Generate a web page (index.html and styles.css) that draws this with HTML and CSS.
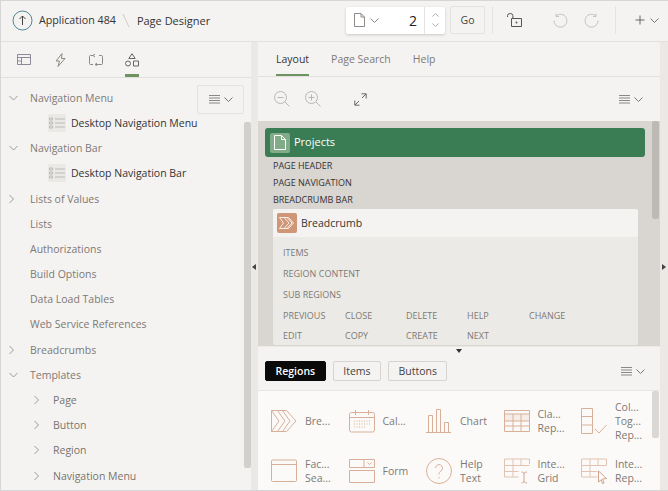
FILE: index.html
```html
<!DOCTYPE html>
<html lang="en">
<head>
<meta charset="utf-8">
<title>Page Designer</title>
<link rel="stylesheet" href="styles.css">
</head>
<body>
<div class="app">
  <header class="topbar">
    <svg class="up" width="21" height="21" viewBox="0 0 21 21"><circle cx="10.5" cy="10.5" r="9.5" fill="none" stroke="#4f8597" stroke-width="1"/><path d="M10.5 15V6M7.5 9l3-3 3 3" fill="none" stroke="#444" stroke-width="1"/></svg>
    <span class="crumb first">Application 484</span>
    <svg class="slash" width="8" height="15" viewBox="0 0 8 15"><path d="M1 1l6 13" stroke="#d0ccc8" fill="none"/></svg>
    <span class="crumb">Page Designer</span>
    <div class="spacer"></div>
    <div class="pagebox">
      <div class="pagesel">
        <svg width="11" height="14" viewBox="0 0 11 14"><path d="M.5.5h6.500l3.500 3.500v9.500h-10zM7 .5v3.500h3.500" fill="none" stroke="#8d8a88"/></svg>
        <svg class="chev" width="9" height="5" viewBox="0 0 9 5"><path d="M.5.500l4 4 4-4" fill="none" stroke="#8d8a88"/></svg>
        <span class="pagenum">2</span>
      </div>
      <div class="stepper">
        <svg width="7" height="4" viewBox="0 0 7 4"><path d="M.5 3.500l3-3 3 3" fill="none" stroke="#aaa"/></svg>
        <svg width="7" height="4" viewBox="0 0 7 4"><path d="M.5.500l3 3 3-3" fill="none" stroke="#aaa"/></svg>
      </div>
    </div>
    <button class="go">Go</button>
    <span class="vr first-vr"></span>
    <svg class="lock" width="15" height="14" viewBox="0 0 15 14"><path d="M4.500 5.500h10v8h-10z" fill="none" stroke="#555"/><path d="M.5 4V2.700a2.700 2.200 0 0 1 5.400 0V5.500" fill="none" stroke="#555"/><circle cx="9.500" cy="9.500" r=".9" fill="#555"/></svg>
    <svg class="undo" width="15" height="15" viewBox="0 0 15 15"><path d="M3 3a6.500 6.500 0 1 1-2 4.500M3 .5V3.500h3" fill="none" stroke="#c6c4c2"/></svg>
    <svg class="redo" width="15" height="15" viewBox="0 0 15 15"><path d="M12 3a6.500 6.500 0 1 0 2 4.500M12 .5V3.500H9" fill="none" stroke="#c6c4c2"/></svg>
    <span class="vr second-vr"></span>
    <svg class="plus" width="10" height="10" viewBox="0 0 10 10"><path d="M5 .5v9M.5 5h9" stroke="#666" fill="none"/></svg>
    <svg class="chev plus-chev" width="9" height="5" viewBox="0 0 9 5"><path d="M.5.500l4 4 4-4" fill="none" stroke="#777"/></svg>
  </header>

  <div class="main">
    <aside class="left">
      <nav class="lefttabs">
        <span class="ltab"><svg width="14" height="11" viewBox="0 0 14 11"><path d="M.5.500h13v10H.5zM.5 3.500h13M4.500 3.500v7M.5 7h4" fill="none" stroke="#8e8a9a"/></svg></span>
        <span class="ltab"><svg width="11" height="14" viewBox="0 0 11 14"><path d="M7 .5L1 8h3.500L3 13.500 10 5.500H6.500z" fill="none" stroke="#8a8a80"/></svg></span>
        <span class="ltab"><svg width="14" height="12" viewBox="0 0 14 12"><path d="M4 1.500H1.500a1 1 0 0 0-1 1v7a1 1 0 0 0 1 1H4M10 1.500h2.500a1 1 0 0 1 1 1v7a1 1 0 0 1-1 1H7M6 .2L4 1.500 6 3M8 9l-2 1.500L8 12" fill="none" stroke="#8a8a8a"/></svg></span>
        <span class="ltab active"><svg width="14" height="14" viewBox="0 0 14 14"><path d="M7 .7l3.200 4.800H3.800z M8.500 8h5v5h-5z" fill="none" stroke="#666"/><circle cx="3" cy="10.500" r="2.500" fill="none" stroke="#666"/></svg></span>
      </nav>
      <div class="tree">
        <div class="row"><svg class="tw" width="9" height="5" viewBox="0 0 9 5"><path d="M.5.500l4 4 4-4" fill="none" stroke="#999"/></svg><span>Navigation Menu</span></div>
        <div class="row leaf"><span class="leaficon"><svg width="16" height="12" viewBox="0 0 16 12"><path d="M6 2h10M6 6h10M6 10h10" stroke="#bbb" fill="none"/><path d="M.5 1h3v2h-3zM.5 5h3v2h-3zM.5 9h3v2h-3z" stroke="#bbb" fill="none"/></svg></span><span>Desktop Navigation Menu</span></div>
        <div class="row"><svg class="tw" width="9" height="5" viewBox="0 0 9 5"><path d="M.5.500l4 4 4-4" fill="none" stroke="#999"/></svg><span>Navigation Bar</span></div>
        <div class="row leaf"><span class="leaficon"><svg width="16" height="12" viewBox="0 0 16 12"><path d="M6 2h10M6 6h10M6 10h10" stroke="#bbb" fill="none"/><path d="M.5 1h3v2h-3zM.5 5h3v2h-3zM.5 9h3v2h-3z" stroke="#bbb" fill="none"/></svg></span><span>Desktop Navigation Bar</span></div>
        <div class="row"><svg class="tw" width="5" height="9" viewBox="0 0 5 9"><path d="M.5.500l4 4-4 4" fill="none" stroke="#999"/></svg><span>Lists of Values</span></div>
        <div class="row"><span>Lists</span></div>
        <div class="row"><span>Authorizations</span></div>
        <div class="row"><span>Build Options</span></div>
        <div class="row"><span>Data Load Tables</span></div>
        <div class="row"><span>Web Service References</span></div>
        <div class="row"><svg class="tw" width="5" height="9" viewBox="0 0 5 9"><path d="M.5.500l4 4-4 4" fill="none" stroke="#999"/></svg><span>Breadcrumbs</span></div>
        <div class="row"><svg class="tw" width="9" height="5" viewBox="0 0 9 5"><path d="M.5.500l4 4 4-4" fill="none" stroke="#999"/></svg><span>Templates</span></div>
        <div class="row sub"><svg class="tw" width="5" height="9" viewBox="0 0 5 9"><path d="M.5.500l4 4-4 4" fill="none" stroke="#999"/></svg><span>Page</span></div>
        <div class="row sub"><svg class="tw" width="5" height="9" viewBox="0 0 5 9"><path d="M.5.500l4 4-4 4" fill="none" stroke="#999"/></svg><span>Button</span></div>
        <div class="row sub"><svg class="tw" width="5" height="9" viewBox="0 0 5 9"><path d="M.5.500l4 4-4 4" fill="none" stroke="#999"/></svg><span>Region</span></div>
        <div class="row sub"><svg class="tw" width="5" height="9" viewBox="0 0 5 9"><path d="M.5.500l4 4-4 4" fill="none" stroke="#999"/></svg><span>Navigation Menu</span></div>
        <div class="treemenu"><svg width="12" height="9" viewBox="0 0 12 9"><path d="M0 .5h11M0 3h11M0 5.500h11M0 8h11" stroke="#888" fill="none"/></svg><svg width="9" height="5" viewBox="0 0 9 5"><path d="M.5.500l4 4 4-4" fill="none" stroke="#777"/></svg></div>
        <div class="sb tree-sb"></div>
      </div>
    </aside>

    <div class="gutter left-gutter"><span class="arrow-l"></span></div>

    <section class="center">
      <nav class="ctabs">
        <span class="ctab active">Layout</span>
        <span class="ctab">Page Search</span>
        <span class="ctab">Help</span>
      </nav>
      <div class="ctools">
        <svg class="zo" width="16" height="16" viewBox="0 0 16 16"><circle cx="6.500" cy="6.500" r="6" fill="none" stroke="#b8b6b4"/><path d="M3.500 6.500h6M11 11l4.500 4.500" stroke="#b8b6b4" fill="none"/></svg>
        <svg class="zi" width="16" height="16" viewBox="0 0 16 16"><circle cx="6.500" cy="6.500" r="6" fill="none" stroke="#b8b6b4"/><path d="M3.500 6.500h6M6.500 3.500v6M11 11l4.500 4.500" stroke="#b8b6b4" fill="none"/></svg>
        <svg class="ex" width="13" height="13" viewBox="0 0 13 13"><path d="M1 12L5 8M8 5l4-4M7.500 .8h4.700v4.700M.8 7.500v4.700h4.700" stroke="#666" fill="none"/></svg>
        <div class="spacer"></div>
        <svg class="m1" width="12" height="9" viewBox="0 0 12 9"><path d="M0 .5h11M0 3h11M0 5.500h11M0 8h11" stroke="#888" fill="none"/></svg>
        <svg width="9" height="5" viewBox="0 0 9 5"><path d="M.5.500l4 4 4-4" fill="none" stroke="#777"/></svg>
      </div>
      <div class="canvas">
        <div class="pagehead">
          <span class="pageicon"><svg width="12" height="15" viewBox="0 0 12 15"><path d="M.5.500h7l4 4v10H.5zM7.500.5v4h4" fill="none" stroke="#fff"/></svg></span>
          <span class="pagetitle">Projects</span>
        </div>
        <div class="plabel">PAGE HEADER</div>
        <div class="plabel">PAGE NAVIGATION</div>
        <div class="plabel">BREADCRUMB BAR</div>
        <div class="card">
          <div class="cardhead">
            <span class="cicon"><svg width="16" height="12" viewBox="0 0 16 12"><path d="M.5.500h9l5 5.500-5 5.500h-9l4-5.500zM5 .5l5 5.500-5 5.500M8 .5l5 5.500-5 5.500" fill="none" stroke="#fbeee6"/></svg></span>
            <span>Breadcrumb</span>
          </div>
          <div class="cardbody">
            <div class="slot">ITEMS</div>
            <div class="slot">REGION CONTENT</div>
            <div class="slot">SUB REGIONS</div>
            <div class="slots">
              <span>PREVIOUS</span><span>CLOSE</span><span>DELETE</span><span>HELP</span><span>CHANGE</span>
              <span>EDIT</span><span>COPY</span><span>CREATE</span><span>NEXT</span>
            </div>
          </div>
        </div>
        <div class="sb canvas-sb"></div>
      </div>
      <div class="hsplit"><span class="arrow-d"></span></div>
      <div class="gtools">
        <button class="gbtn on">Regions</button>
        <button class="gbtn">Items</button>
        <button class="gbtn">Buttons</button>
        <div class="spacer"></div>
        <svg class="m1" width="12" height="9" viewBox="0 0 12 9"><path d="M0 .5h11M0 3h11M0 5.500h11M0 8h11" stroke="#888" fill="none"/></svg>
        <svg width="9" height="5" viewBox="0 0 9 5"><path d="M.5.500l4 4 4-4" fill="none" stroke="#777"/></svg>
      </div>
      <div class="gallery">
        <div class="gitem">
          <svg width="26" height="24" viewBox="0 0 26 24"><path d="M.5 1.500h15l9.500 10.500-9.500 10.500H.5zM.5 1.500L8 12 .5 22.500M6.500 1.500L14 12 6.500 22.500M11.500 1.500L19 12l-7.500 10.500" fill="none" stroke="#d8b09a"/></svg>
          <span>Bre...</span>
        </div>
        <div class="gitem">
          <svg width="26" height="24" viewBox="0 0 26 24"><rect x=".5" y="3.500" width="25" height="19.500" rx="2" fill="none" stroke="#d8b09a"/><path d="M.5 8.500h25M6.500 1v5M19.500 1v5" stroke="#d8b09a" fill="none"/><path d="M5 12h16M5 15h16M5 18h12" stroke="#d8b09a" stroke-dasharray="1 1.500" fill="none"/></svg>
          <span>Cal...</span>
        </div>
        <div class="gitem">
          <svg width="26" height="24" viewBox="0 0 26 24"><path d="M0 23.500h25M2.500 23.500v-17h4v17M10.500 23.500V.5h4v23M18.500 23.500v-10h4v10" fill="none" stroke="#d8b09a"/></svg>
          <span>Chart</span>
        </div>
        <div class="gitem">
          <svg width="26" height="24" viewBox="0 0 26 24"><path d="M.5 5h25v7H.5z" fill="#f5ece6"/><path d="M.5 1.500h25v21H.5zM.5 5h25M.5 12h25M.5 17h25M9 5v17.500M17 5v17.500" fill="none" stroke="#d8b09a"/></svg>
          <span class="two">Cla...<br>Rep...</span>
        </div>
        <div class="gitem">
          <svg width="26" height="26" viewBox="0 0 26 26"><path d="M.5.500h11v25H.5zM.5 8.500h11M.5 17h11M14 21l4 4 7.500-8" fill="none" stroke="#d8b09a"/></svg>
          <span class="three">Col...<br>Tog...<br>Rep...</span>
        </div>
        <div class="gitem">
          <svg width="26" height="24" viewBox="0 0 26 24"><rect x=".5" y="1" width="25" height="21.500" rx="1" fill="none" stroke="#d8b09a"/><path d="M.5 5.500h25" stroke="#d8b09a" fill="none"/></svg>
          <span class="two">Fac...<br>Sea...</span>
        </div>
        <div class="gitem">
          <svg width="26" height="24" viewBox="0 0 26 24"><path d="M.5.500h25v8H.5zM15 .5v8M.5 11.500h25v12H.5z" fill="none" stroke="#d8b09a"/><path d="M18.500 3.500l2 2 2-2" fill="none" stroke="#d8b09a"/></svg>
          <span>Form</span>
        </div>
        <div class="gitem">
          <svg width="26" height="26" viewBox="0 0 26 26"><circle cx="13" cy="13" r="12.500" fill="none" stroke="#d8b09a"/><path d="M9.500 10a3.500 3.500 0 1 1 5.500 3c-1.500 1-2 1.500-2 3.500M13 19v1.500" fill="none" stroke="#d8b09a"/></svg>
          <span class="two">Help<br>Text</span>
        </div>
        <div class="gitem">
          <svg width="26" height="26" viewBox="0 0 26 26"><path d="M.5 1h25v5M.5 1v18h14M.5 7.500h25M.5 13.500h14M9 1v18M17 1v6" fill="none" stroke="#e0c3b1"/><path d="M17.500 14c2 0 2.500 1 2.500 2v7c0 1-.5 2-2.500 2M23 14c-2 0-3 1-3 2M23 25c-2 0-3-1-3-2" fill="none" stroke="#cfa48c"/></svg>
          <span class="two">Inte...<br>Grid</span>
        </div>
        <div class="gitem">
          <svg width="26" height="26" viewBox="0 0 26 26"><path d="M.5 1h25v6M.5 1v18h16M.5 7.500h25M.5 13.500h16M9 1v18M17 1v6" fill="none" stroke="#e0c3b1"/><path d="M17.500 13l8 7.500-4 .5 1.500 4-1.500.7-1.500-4-2.500 2.500z" fill="#fcfaf9" stroke="#cfa48c"/></svg>
          <span class="two">Inte...<br>Rep...</span>
        </div>
        <div class="sb gallery-sb"></div>
      </div>
    </section>

    <div class="gutter right-gutter"><span class="arrow-r"></span></div>
  </div>
</div>
</body>
</html>
```

FILE: styles.css
```css
* { box-sizing: border-box; }
html, body { margin: 0; padding: 0; height: 100%; overflow: hidden; }
body { font-family: "Open Sans", sans-serif; font-size: 10.500px; color: #333; background: #f5f3f1; }
svg { display: block; flex: none; }
.spacer { flex: 1; }
.app { width: 668px; height: 491px; display: flex; flex-direction: column; border-top: 1px solid #d6d6d6; border-left: 1px solid #d6d6d6; border-bottom: 1px solid #d6d6d6; }

.topbar { height: 41px; flex: none; display: flex; align-items: center; padding: 0 0 2px 11px; border-bottom: 1px solid #e2e0de; background: #f5f3f1; }
.crumb { font-size: 11px; color: #333; }
.crumb.first { margin-left: 6px; font-size: 10.700px; }
.slash { margin: 0 7px 0 6px; }
.pagebox { width: 99px; height: 27px; display: flex; background: #fff; border-radius: 2px; box-shadow: 0 1px 3px rgba(0,0,0,.18); margin-right: 5px; }
.pagesel { width: 78px; display: flex; align-items: center; padding-left: 8px; gap: 5px; }
.pagenum { margin-left: auto; margin-right: 7px; font-size: 14px; color: #222; }
.stepper { flex: 1; border-left: 1px solid #e5e3e1; display: flex; flex-direction: column; align-items: center; justify-content: space-around; padding: 4px 0; }
.go { width: 35px; height: 28px; padding: 0; border: 1px solid #e5e3e1; border-radius: 2px; background: #f5f3f1; font: 10.500px "Open Sans", sans-serif; color: #444; }
.vr { width: 1px; height: 28px; background: #e5e3e1; }
.first-vr { margin-left: 7px; }
.lock { margin-left: 14px; }
.undo { margin-left: 31px; }
.redo { margin-left: 16px; }
.second-vr { margin-left: 16px; }
.plus { margin-left: 19px; }
.plus-chev { margin-left: 5px; margin-right: 9px; }

.main { flex: 1; min-height: 0; display: flex; }
.left { width: 250px; flex: none; display: flex; flex-direction: column; }
.lefttabs { height: 36px; flex: none; display: flex; border-bottom: 1px solid #e2e0de; padding-left: 16px; gap: 22px; }
.ltab { width: 14px; height: 35px; display: flex; align-items: center; justify-content: center; }
.ltab.active { box-shadow: inset 0 -3px 0 #6d9360; }
.tree { flex: 1; min-height: 0; position: relative; overflow: hidden; padding-top: 7.350px; }
.row { height: 25.180px; display: flex; align-items: center; padding-left: 29px; position: relative; color: #7d7975; white-space: nowrap; }
.row .tw { position: absolute; left: 8px; top: 50%; transform: translateY(-50%); }
.row.sub { padding-left: 52px; color: #78746f; }
.row.sub .tw { left: 33px; }
.row.leaf { padding-left: 47px; color: #333; }
.leaficon { width: 18px; height: 18px; margin-right: 5px; background: #ebe9e6; border-radius: 1px; display: flex; align-items: center; justify-content: center; }
.treemenu { position: absolute; left: 196px; top: 7px; width: 47px; height: 29px; border: 1px solid #e5e3e1; background: #f5f3f1; border-radius: 2px; display: flex; align-items: center; justify-content: center; gap: 3px; }
.sb { position: absolute; background: #d2d0cd; border-radius: 2px; width: 7px; }
.tree-sb { left: 243px; top: 44px; height: 346px; }

.gutter { width: 7px; flex: none; background: #ebe8e5; position: relative; }
.right-gutter { width: 8px; }
.arrow-l { position: absolute; left: 1px; top: 222px; border: 3px solid transparent; border-right: 4px solid #444; border-left: 0; }
.arrow-r { position: absolute; left: 2px; top: 222px; border: 3px solid transparent; border-left: 4px solid #444; border-right: 0; }

.center { width: 402px; flex: none; display: flex; flex-direction: column; }
.ctabs { height: 35px; flex: none; display: flex; gap: 22px; padding-left: 18px; border-bottom: 1px solid #e2e0de; }
.ctab { height: 34px; display: flex; align-items: center; padding-bottom: 1px; color: #7d7975; }
.ctab.active { color: #333; box-shadow: inset 0 -2px 0 #6d9360; }
.ctools { height: 44px; flex: none; display: flex; align-items: center; padding: 0 17px 0 16px; }
.zi { margin-left: 15px; }
.ex { margin-left: 33px; }
.m1 { margin-right: 3px; }
.canvas { height: 225px; flex: none; background: #d9d5d1; padding: 7px 0 0 7px; position: relative; overflow: hidden; }
.pagehead { width: 380px; height: 29px; background: #3a7d55; border-radius: 3px; display: flex; align-items: center; padding-left: 5px; color: #fff; font-size: 11px; }
.pagetitle { margin-bottom: 2px; }
.pageicon { width: 20px; height: 20px; margin-right: 4px; border-radius: 2px; background: #82ab87; display: flex; align-items: center; justify-content: center; }
.plabel { height: 17px; line-height: 18px; margin-left: 8px; font-size: 9px; color: #333; }
.card { width: 365px; margin: 1px 0 0 8px; background: #ecEAe6; border-radius: 2px; overflow: hidden; }
.cardhead { height: 28px; background: #f5f3f1; display: flex; align-items: center; padding-left: 4px; gap: 4px; color: #333; }
.cicon { width: 20px; height: 20px; background: #cf9678; border-radius: 2px; display: flex; align-items: center; justify-content: center; }
.cardbody { padding: 5px 10px 0; font-size: 9px; color: #7d7975; }
.slot { height: 21px; line-height: 21px; }
.slots { display: grid; grid-template-columns: 62px 61px 61px 62px 1fr; grid-auto-rows: 20px; line-height: 21px; }
.sb.canvas-sb { left: 394px; top: 0; height: 98px; background: #bdbab6; }
.hsplit { height: 8px; flex: none; background: #f5f3f1; border-top: 1px solid #ece9e7; display: flex; justify-content: center; align-items: center; }
.arrow-d { border: 3.500px solid transparent; border-top: 4px solid #333; border-bottom: 0; }
.gtools { height: 37px; flex: none; display: flex; align-items: center; padding: 0 15px 2px 7px; gap: 7px; border-bottom: 1px solid #e8e6e4; }
.gtools .m1 { margin-right: -4px; }
.gbtn { height: 20px; padding: 0 9.500px; border: 1px solid #d6d3d0; border-radius: 2px; background: #f5f3f1; font: 10.500px "Open Sans", sans-serif; color: #444; }
.gbtn.on { background: #0a0a0a; border-color: #0a0a0a; color: #fff; font-weight: 600; }
.gallery { flex: 1; min-height: 0; background: #fcfaf9; position: relative; overflow: hidden; display: grid; grid-template-columns: repeat(5, 77.500px); grid-auto-rows: 50px; padding: 5px 0 0 13px; }
.gitem { display: flex; align-items: center; gap: 8px; padding-bottom: 1px; color: #7d7975; line-height: 14px; }
.sb.gallery-sb { left: 394px; top: 0; height: 47px; background: #dad8d5; }
```
